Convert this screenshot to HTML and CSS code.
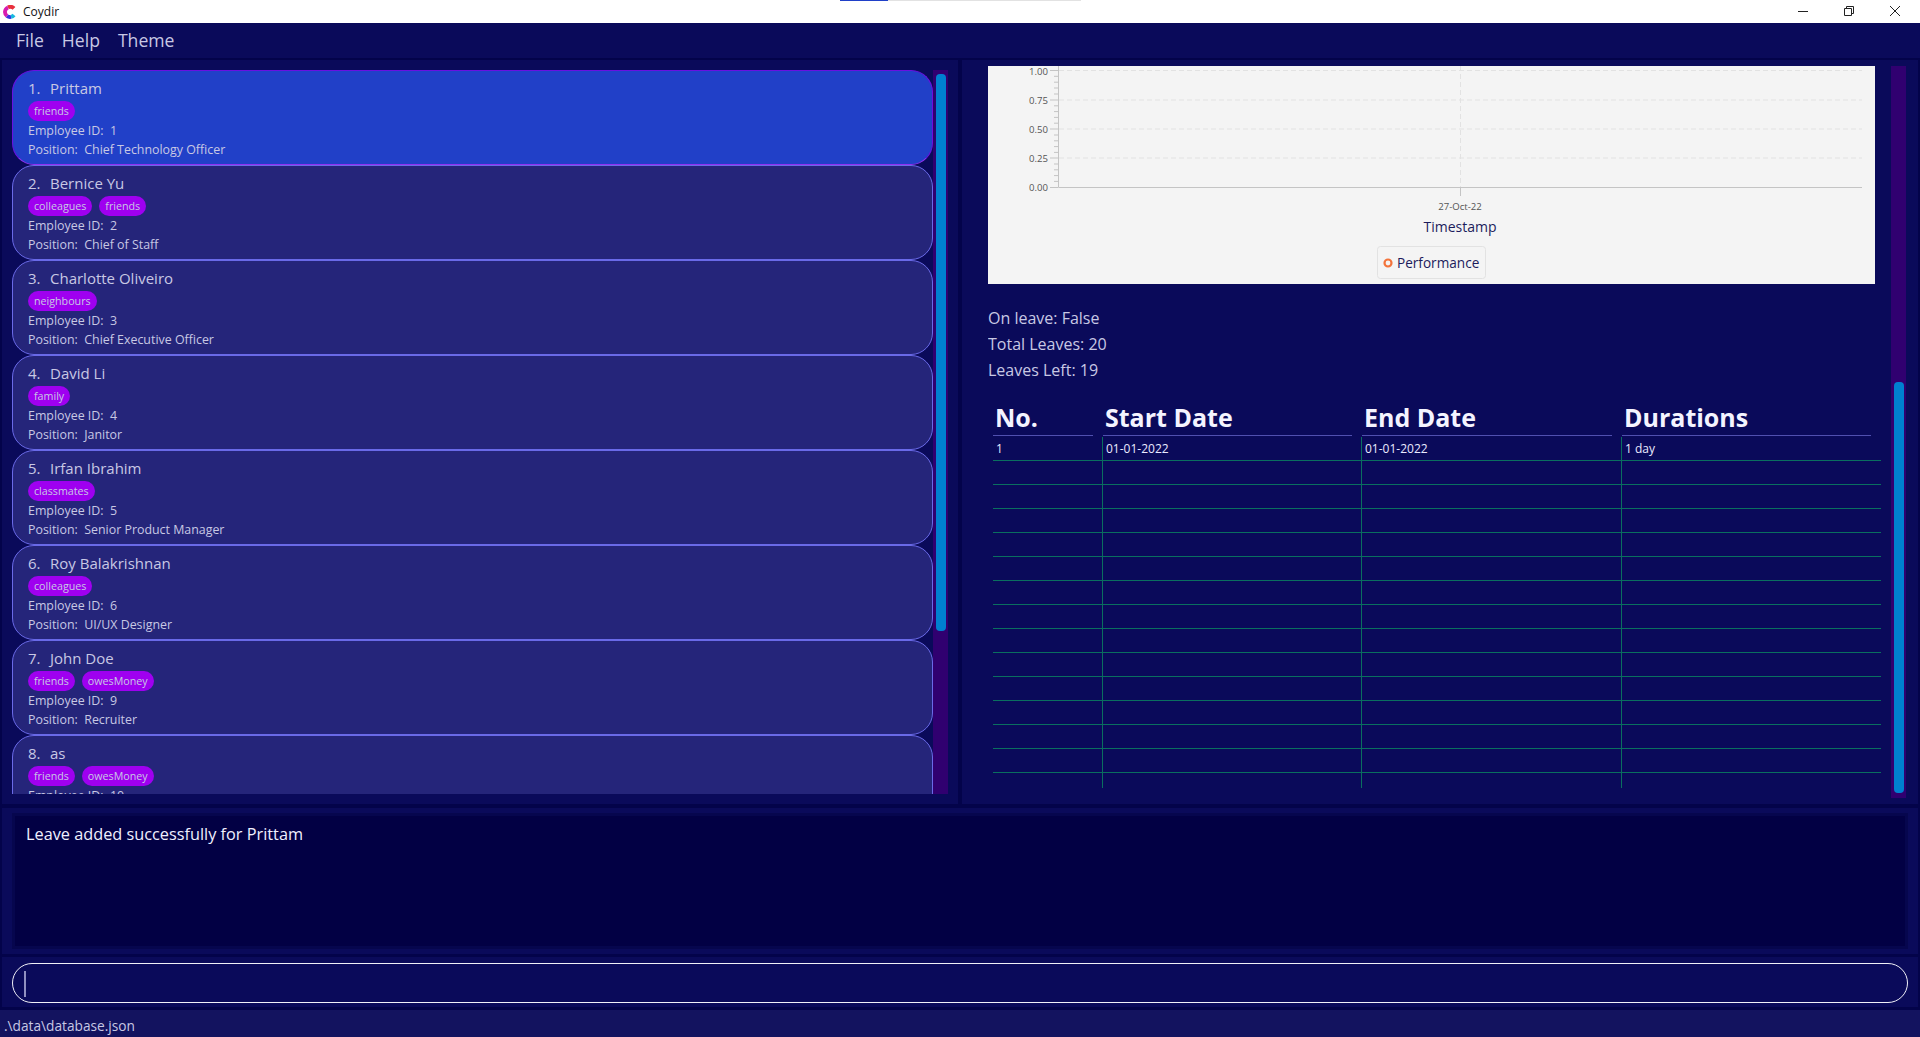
FILE: index.html
```html
<!DOCTYPE html>
<html lang="en">
<head>
	<meta charset="UTF-8">
	<title>Coydir</title>
	<link rel="stylesheet" href="styles.css">
</head>
<body>
<div class="titlebar">
	<svg class="logo" width="14" height="14" viewBox="0 0 14 14">
		<path d="M11 3.4A5 5 0 0 0 5 2.4" fill="none" stroke="#e8303c" stroke-width="3.8"/>
		<path d="M5 2.4A5 5 0 0 0 4 11" fill="none" stroke="#d81cb0" stroke-width="3.8"/>
		<path d="M4 11A5 5 0 0 0 8 11.9" fill="none" stroke="#3a30e0" stroke-width="3.8"/>
		<path d="M8 11.9A5 5 0 0 0 11 10" fill="none" stroke="#18b8e0" stroke-width="3.8"/>
	</svg>
	<span class="app-name">Coydir</span>
	<div class="progress"><div class="progress-done"></div></div>
	<div class="win-btns">
		<svg width="12" height="12" viewBox="0 0 12 12"><path d="M1 6.5H11" stroke="#222" fill="none"/></svg>
		<svg width="12" height="12" viewBox="0 0 12 12"><path d="M1.5 3.5H8.5V10.5H1.5ZM3.5 3.5V1.5H10.5V8.5H8.5" stroke="#222" fill="none"/></svg>
		<svg width="12" height="12" viewBox="0 0 12 12"><path d="M1 1L11 11M11 1L1 11" stroke="#222" fill="none"/></svg>
	</div>
</div>

<div class="menubar">
	<span>File</span>
	<span>Help</span>
	<span>Theme</span>
</div>

<div class="main">
	<div class="panel list-panel">
		<div class="card-list">
			<div class="card selected">
				<div class="name"><span class="num">1.</span>Prittam</div>
				<div class="tags"><span class="tag">friends</span></div>
				<div class="line">Employee ID:&nbsp; 1</div>
				<div class="line">Position:&nbsp; Chief Technology Officer</div>
			</div>
			<div class="card">
				<div class="name"><span class="num">2.</span>Bernice Yu</div>
				<div class="tags"><span class="tag">colleagues</span><span class="tag">friends</span></div>
				<div class="line">Employee ID:&nbsp; 2</div>
				<div class="line">Position:&nbsp; Chief of Staff</div>
			</div>
			<div class="card">
				<div class="name"><span class="num">3.</span>Charlotte Oliveiro</div>
				<div class="tags"><span class="tag">neighbours</span></div>
				<div class="line">Employee ID:&nbsp; 3</div>
				<div class="line">Position:&nbsp; Chief Executive Officer</div>
			</div>
			<div class="card">
				<div class="name"><span class="num">4.</span>David Li</div>
				<div class="tags"><span class="tag">family</span></div>
				<div class="line">Employee ID:&nbsp; 4</div>
				<div class="line">Position:&nbsp; Janitor</div>
			</div>
			<div class="card">
				<div class="name"><span class="num">5.</span>Irfan Ibrahim</div>
				<div class="tags"><span class="tag">classmates</span></div>
				<div class="line">Employee ID:&nbsp; 5</div>
				<div class="line">Position:&nbsp; Senior Product Manager</div>
			</div>
			<div class="card">
				<div class="name"><span class="num">6.</span>Roy Balakrishnan</div>
				<div class="tags"><span class="tag">colleagues</span></div>
				<div class="line">Employee ID:&nbsp; 6</div>
				<div class="line">Position:&nbsp; UI/UX Designer</div>
			</div>
			<div class="card">
				<div class="name"><span class="num">7.</span>John Doe</div>
				<div class="tags"><span class="tag">friends</span><span class="tag">owesMoney</span></div>
				<div class="line">Employee ID:&nbsp; 9</div>
				<div class="line">Position:&nbsp; Recruiter</div>
			</div>
			<div class="card">
				<div class="name"><span class="num">8.</span>as</div>
				<div class="tags"><span class="tag">friends</span><span class="tag">owesMoney</span></div>
				<div class="line">Employee ID:&nbsp; 10</div>
			</div>
		</div>
		<div class="track"><div class="thumb list-thumb"></div></div>
	</div>

	<div class="panel detail-panel">
		<div class="detail">
			<svg class="chart" width="887" height="218" viewBox="0 0 887 218">
				<rect width="887" height="218" fill="#f4f4f4"/>
				<g stroke="#e2e2e2" stroke-dasharray="5 3" fill="none">
					<path d="M71 4.5H874M71 34H874M71 63H874M71 92H874"/>
					<path d="M472.5 0V121"/>
				</g>
				<g stroke="#c4c4c4" fill="none">
					<path d="M70.5 0V121.5H874"/>
					<path d="M62 4.5H70M62 34H70M62 63H70M62 92H70M62 121.5H70M472.5 121V130"/>
					<path d="M66 10.3H70M66 16.2H70M66 22H70M66 28H70M66 39.8H70M66 45.6H70M66 51.4H70M66 57.2H70M66 69H70M66 74.8H70M66 80.6H70M66 86.4H70M66 98H70M66 103.8H70M66 109.6H70M66 115.4H70"/>
				</g>
				<g class="tick-text" text-anchor="end">
					<text x="60" y="9">1.00</text>
					<text x="60" y="38">0.75</text>
					<text x="60" y="67">0.50</text>
					<text x="60" y="96">0.25</text>
					<text x="60" y="125">0.00</text>
				</g>
				<text class="tick-text" x="472" y="143.5" text-anchor="middle">27-Oct-22</text>
				<text class="axis-text" x="472" y="166" text-anchor="middle">Timestamp</text>
				<rect x="389.5" y="180.5" width="108" height="32" rx="3" fill="#f4f4f4" stroke="#e2e2e2"/>
				<circle cx="400" cy="197" r="3.5" fill="#f4f4f4" stroke="#f3743c" stroke-width="2.2"/>
				<text class="axis-text perf" x="409" y="202">Performance</text>
			</svg>

			<div class="leave-info">
				<div>On leave: False</div>
				<div>Total Leaves: 20</div>
				<div>Leaves Left: 19</div>
			</div>

			<div class="leave-table">
				<div class="leave-head">
					<div>No.</div>
					<div>Start Date</div>
					<div>End Date</div>
					<div>Durations</div>
				</div>
				<div class="leave-row"><div>1</div><div>01-01-2022</div><div>01-01-2022</div><div>1 day</div></div>
				<div class="leave-row"><div></div><div></div><div></div><div></div></div>
				<div class="leave-row"><div></div><div></div><div></div><div></div></div>
				<div class="leave-row"><div></div><div></div><div></div><div></div></div>
				<div class="leave-row"><div></div><div></div><div></div><div></div></div>
				<div class="leave-row"><div></div><div></div><div></div><div></div></div>
				<div class="leave-row"><div></div><div></div><div></div><div></div></div>
				<div class="leave-row"><div></div><div></div><div></div><div></div></div>
				<div class="leave-row"><div></div><div></div><div></div><div></div></div>
				<div class="leave-row"><div></div><div></div><div></div><div></div></div>
				<div class="leave-row"><div></div><div></div><div></div><div></div></div>
				<div class="leave-row"><div></div><div></div><div></div><div></div></div>
				<div class="leave-row"><div></div><div></div><div></div><div></div></div>
				<div class="leave-row"><div></div><div></div><div></div><div></div></div>
				<div class="leave-row stub"><div></div><div></div><div></div><div></div></div>
			</div>
		</div>
		<div class="track track-end"><div class="thumb detail-thumb"></div></div>
	</div>
</div>

<div class="panel result-panel">
	<div class="result-box">Leave added successfully for Prittam</div>
</div>

<div class="panel command-panel">
	<div class="command-box"><div class="caret"></div></div>
</div>

<div class="statusbar">.\data\database.json</div>
</body>
</html>
```

FILE: styles.css
```css
* { box-sizing: border-box; }

html, body { margin: 0; padding: 0; height: 100%; overflow: hidden; }

body {
	display: flex;
	flex-direction: column;
	background: #03034a;
	color: #c8c8e4;
	font-family: "Open Sans", "Noto Sans", sans-serif;
	font-size: 12.4px;
}
body > div { flex-shrink: 0; }

/* window title */
.titlebar {
	display: flex;
	align-items: center;
	height: 23px;
	background: #fff;
	position: relative;
}
.logo { margin-left: 3px; }
.app-name { margin-left: 6px; font-size: 12px; color: #111; }
.progress {
	position: absolute;
	top: 0;
	left: 840px;
	width: 241px;
	height: 1px;
	background: #e2e2e2;
}
.progress-done { width: 48px; height: 1px; background: #2040c8; }
.win-btns {
	margin-left: auto;
	display: flex;
	gap: 34px;
	padding: 0 19px 2px 0;
}

.menubar {
	display: flex;
	gap: 18px;
	align-items: center;
	height: 35px;
	margin-bottom: 2px;
	padding: 0 0 2px 16px;
	background: #0a0a5a;
	font-size: 17.6px;
}

.panel { background: #0a0a5a; }

.main {
	display: flex;
	gap: 4px;
	height: 744px;
	padding: 0 2px;
}

/* employee list */
.list-panel {
	display: flex;
	width: 956px;
	padding: 10px;
}
.card-list { flex: 1; overflow: hidden; }
.card {
	height: 95px;
	padding: 4px 15px 0;
	background: #25257a;
	border: 1px solid #6a6ae8;
	border-radius: 22px;
}
.card.selected {
	background: #2140c8;
	border-color: #6a10e0 #6a10e0 #9030f0;
}
.name { height: 26px; line-height: 26px; font-size: 15px; white-space: nowrap; }
.num { display: inline-block; width: 22px; }
.tags { display: flex; gap: 7px; height: 20px; }
.tag {
	height: 20px;
	line-height: 20px;
	padding: 0 6px;
	border-radius: 10px;
	background: #9f00f0;
	font-size: 10.7px;
}
.line { height: 19px; line-height: 19px; white-space: nowrap; }

.track {
	width: 15px;
	padding: 4px 2px 0 3px;
	background: #300070;
}
.thumb { width: 10px; border-radius: 4px; background: #0080d0; }
.list-thumb { height: 557px; }
.track-end { display: flex; flex-direction: column; justify-content: flex-end; padding: 0 2px 5px 3px; }
.detail-thumb { height: 411px; }

/* employee detail */
.detail-panel {
	display: flex;
	flex: 1;
	padding: 6px 12px 6px 26px;
}
.detail { flex: 1; overflow: hidden; }
.chart { display: block; }
.tick-text { font-size: 9.6px; fill: #555; }
.axis-text { font-size: 14px; fill: #1c1c5c; }
.perf { font-size: 13.6px; }

.leave-info {
	margin-top: 21px;
	font-size: 16px;
	line-height: 26px;
}

.leave-table { width: 888px; margin: 17px 0 0 5px; }
.leave-head {
	display: grid;
	grid-template-columns: 110px 259px 260px 259px;
	height: 36px;
}
.leave-head div {
	margin-right: 10px;
	padding-left: 2px;
	border-bottom: 1px solid #5050b0;
	color: #f4f4ff;
	font-size: 25px;
	font-weight: 700;
	line-height: 34px;
}
.leave-row {
	display: grid;
	grid-template-columns: 109px 259px 260px 260px;
	height: 24px;
	border-bottom: 1px solid #0a6f5f;
	color: #eaeaff;
	font-size: 12px;
	line-height: 24px;
}
.leave-row div { padding-left: 3px; }
.leave-row div + div { border-left: 1px solid #0a6f5f; }
.leave-row.stub { height: 15px; border-bottom: none; }
.leave-head + .leave-row { margin-top: 1px; }

/* bottom */
.result-panel {
	height: 146px;
	margin: 4px 2px 0;
	padding: 5px 10px;
}
.result-box {
	height: 136px;
	padding: 7px 11px;
	background: #020044;
	border: 3px solid #06064e;
	color: #f0f0ff;
	font-size: 16.3px;
}
.command-panel {
	height: 50px;
	margin: 3px 2px 0;
	padding: 6px 10px;
}
.command-box {
	height: 40px;
	padding: 7px 11px;
	border: 1px solid #f0f0f8;
	border-radius: 20px;
}
.caret { width: 2px; height: 26px; background: #9090c0; }

.statusbar {
	flex: 1;
	margin-top: 3px;
	padding: 4px 0 0 4px;
	background: #13135f;
	font-size: 13.7px;
	line-height: 23px;
}
```
